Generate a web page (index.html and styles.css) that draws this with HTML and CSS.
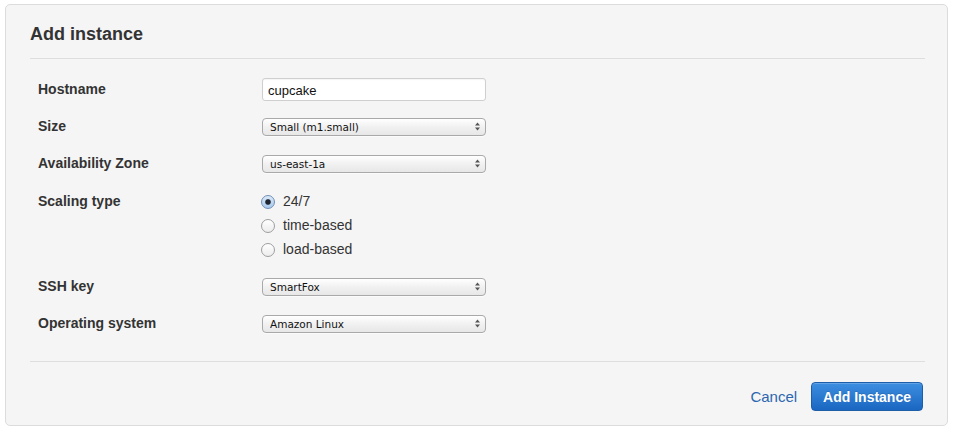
FILE: index.html
```html
<!DOCTYPE html>
<html lang="en">
<head>
<meta charset="utf-8">
<title>Add instance</title>
<link rel="stylesheet" href="styles.css">
</head>
<body>
<div class="panel">
  <h2 class="panel-title">Add instance</h2>
  <form class="form">
    <div class="row">
      <label class="label" for="hostname">Hostname</label>
      <input class="text-input" id="hostname" type="text" value="cupcake">
    </div>
    <div class="row">
      <label class="label">Size</label>
      <div class="select-wrap">
        <select class="select"><option>Small (m1.small)</option></select>
        <svg class="arrows" width="7" height="9" viewBox="0 0 7 9"><path d="M3.5 0.5 L6 3.5 H1 Z M3.5 8.5 L6 5.5 H1 Z" fill="#555"/></svg>
      </div>
    </div>
    <div class="row">
      <label class="label">Availability Zone</label>
      <div class="select-wrap">
        <select class="select"><option>us-east-1a</option></select>
        <svg class="arrows" width="7" height="9" viewBox="0 0 7 9"><path d="M3.5 0.5 L6 3.5 H1 Z M3.5 8.5 L6 5.5 H1 Z" fill="#555"/></svg>
      </div>
    </div>
    <div class="row row-top">
      <label class="label label-tall">Scaling type</label>
      <div class="radios">
        <label class="radio"><input type="radio" name="scaling" checked><span>24/7</span></label>
        <label class="radio"><input type="radio" name="scaling"><span>time-based</span></label>
        <label class="radio"><input type="radio" name="scaling"><span>load-based</span></label>
      </div>
    </div>
    <div class="row">
      <label class="label">SSH key</label>
      <div class="select-wrap">
        <select class="select"><option>SmartFox</option></select>
        <svg class="arrows" width="7" height="9" viewBox="0 0 7 9"><path d="M3.5 0.5 L6 3.5 H1 Z M3.5 8.5 L6 5.5 H1 Z" fill="#555"/></svg>
      </div>
    </div>
    <div class="row">
      <label class="label">Operating system</label>
      <div class="select-wrap">
        <select class="select"><option>Amazon Linux</option></select>
        <svg class="arrows" width="7" height="9" viewBox="0 0 7 9"><path d="M3.5 0.5 L6 3.5 H1 Z M3.5 8.5 L6 5.5 H1 Z" fill="#555"/></svg>
      </div>
    </div>
  </form>
  <div class="footer">
    <a class="cancel" href="#">Cancel</a>
    <button class="btn-primary" type="button">Add Instance</button>
  </div>
</div>
</body>
</html>
```
FILE: styles.css
```css
html, body {
  margin: 0;
  padding: 0;
  background: #ffffff;
}
body {
  padding: 4px 8px 8px 5px;
  font-family: "Liberation Sans", Arial, Helvetica, sans-serif;
  color: #333;
}
.panel {
  background: #f5f5f5;
  border: 1px solid #dcdcdc;
  border-radius: 5px;
  padding: 0 22px 14px 24px;
}
.panel-title {
  margin: 0;
  padding: 18px 0 13px;
  font-size: 18px;
  line-height: 22px;
  font-weight: bold;
  color: #333;
  border-bottom: 1px solid #dedede;
}
.form {
  padding: 19px 0 26px 8px;
  border-bottom: 1px solid #dedede;
  margin: 0;
}
.row {
  display: flex;
  align-items: center;
  height: 23px;
  margin-bottom: 14px;
}
.row:last-child {
  margin-bottom: 0;
}
.row-top {
  align-items: flex-start;
  height: 72px;
}
.label {
  width: 224px;
  flex: none;
  font-size: 14px;
  font-weight: bold;
  color: #333;
  line-height: 23px;
}
.label-tall {
  line-height: 24px;
}
.text-input {
  width: 224px;
  height: 23px;
  box-sizing: border-box;
  margin: 0;
  border: 1px solid #cfcfcf;
  border-radius: 3px;
  background: #fff;
  padding: 1px 5px 0;
  font-family: "Liberation Sans", Arial, sans-serif;
  font-size: 13px;
  color: #111;
  box-shadow: inset 0 1px 1px rgba(0,0,0,0.04);
}
.select-wrap {
  position: relative;
  width: 224px;
  height: 18px;
}
.select {
  appearance: none;
  -webkit-appearance: none;
  display: block;
  width: 224px;
  height: 18px;
  margin: 0;
  box-sizing: border-box;
  border: 1px solid #a9a9a9;
  border-radius: 4px;
  background: linear-gradient(#ffffff, #f1f1f1 50%, #e7e7e7);
  box-shadow: 0 1px 0 rgba(255,255,255,0.6);
  padding: 0 20px 0 7px;
  font-family: "DejaVu Sans", Verdana, sans-serif;
  font-size: 10.5px;
  line-height: 16px;
  color: #111;
}
.arrows {
  position: absolute;
  right: 5px;
  top: 4px;
  pointer-events: none;
}
.radios {
  display: flex;
  flex-direction: column;
}
.radio {
  display: flex;
  align-items: center;
  height: 24px;
  font-size: 14px;
  color: #333;
}
.radio input {
  appearance: none;
  -webkit-appearance: none;
  width: 14px;
  height: 14px;
  margin: 1px 8px 0 -1px;
  border: 1px solid #9e9e9e;
  border-radius: 50%;
  background: linear-gradient(#ffffff, #ececec);
  box-sizing: border-box;
}
.radio input:checked {
  border-color: #6f8fb4;
  background: radial-gradient(circle closest-side, #1c2530 0, #1c2530 38%, rgba(28,37,48,0) 55%), linear-gradient(#dbe9f8, #a8c8ec);
}
.footer {
  display: flex;
  justify-content: flex-end;
  align-items: center;
  gap: 14px;
  padding: 20px 2px 0 0;
}
.cancel {
  font-size: 15px;
  color: #2b66b0;
  text-decoration: none;
}
.btn-primary {
  height: 29px;
  box-sizing: border-box;
  padding: 0 11px;
  border: 1px solid #1c5ea8;
  border-radius: 4px;
  background: linear-gradient(#3c8fe1, #1a66c1);
  color: #fff;
  font-family: "Liberation Sans", Arial, sans-serif;
  font-size: 14px;
  font-weight: bold;
  box-shadow: inset 0 1px 0 rgba(255,255,255,0.2);
  text-shadow: 0 -1px 0 rgba(0,0,0,0.15);
}
```
